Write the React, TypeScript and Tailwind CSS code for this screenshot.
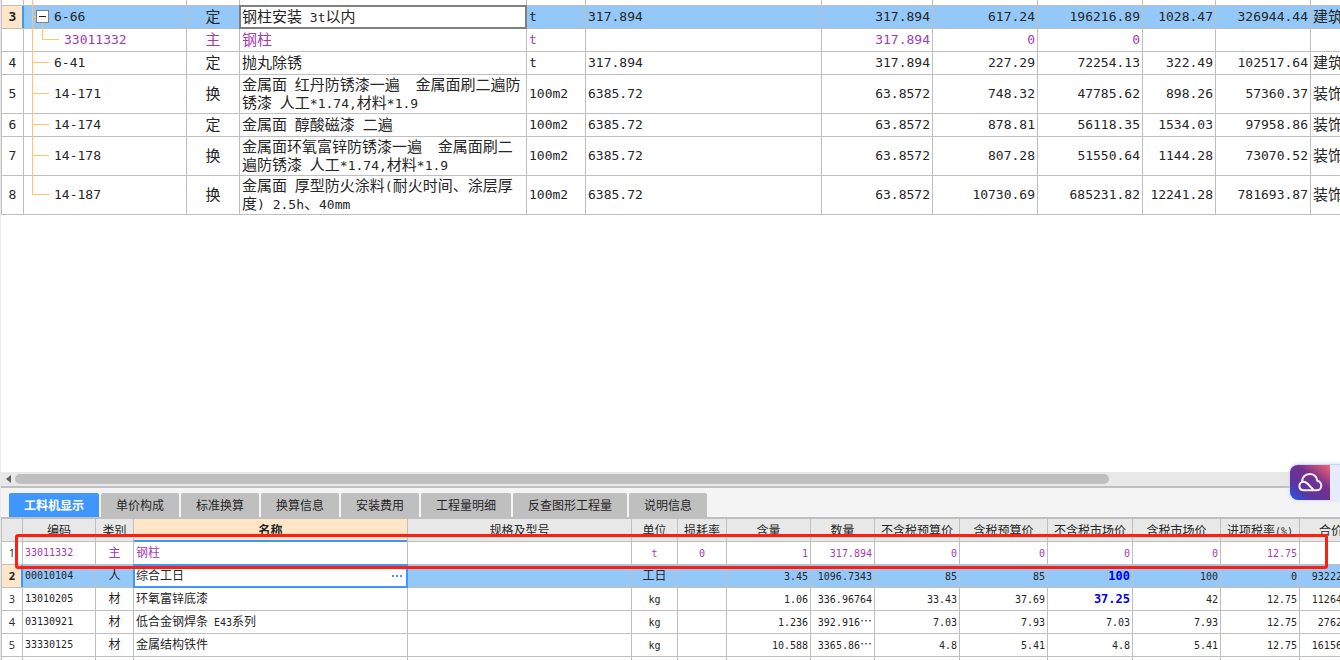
import { useState } from "react";
import clsx from "clsx";

const CJK = "font-['Noto_Sans_CJK_SC',sans-serif]";
const MONO = "font-['DejaVu_Sans_Mono','Noto_Sans_CJK_SC',monospace]";

type Quota = {
  no: string;
  code: string;
  kind: string;
  name: string;
  unit: string;
  expr: string;
  qty: string;
  price: string;
  total: string;
  fullPrice: string;
  fullTotal: string;
  major: string;
  node: "open" | "child" | "leaf" | "last";
};

const QUOTAS: Quota[] = [
  { no: "3", code: "6-66", kind: "定", name: "钢柱安装 3t以内", unit: "t", expr: "317.894", qty: "317.894", price: "617.24", total: "196216.89", fullPrice: "1028.47", fullTotal: "326944.44", major: "建筑", node: "open" },
  { no: "", code: "33011332", kind: "主", name: "钢柱", unit: "t", expr: "", qty: "317.894", price: "0", total: "0", fullPrice: "", fullTotal: "", major: "", node: "child" },
  { no: "4", code: "6-41", kind: "定", name: "抛丸除锈", unit: "t", expr: "317.894", qty: "317.894", price: "227.29", total: "72254.13", fullPrice: "322.49", fullTotal: "102517.64", major: "建筑", node: "leaf" },
  { no: "5", code: "14-171", kind: "换", name: "金属面 红丹防锈漆一遍  金属面刷二遍防\n锈漆 人工*1.74,材料*1.9", unit: "100m2", expr: "6385.72", qty: "63.8572", price: "748.32", total: "47785.62", fullPrice: "898.26", fullTotal: "57360.37", major: "装饰", node: "leaf" },
  { no: "6", code: "14-174", kind: "定", name: "金属面 醇酸磁漆 二遍", unit: "100m2", expr: "6385.72", qty: "63.8572", price: "878.81", total: "56118.35", fullPrice: "1534.03", fullTotal: "97958.86", major: "装饰", node: "leaf" },
  { no: "7", code: "14-178", kind: "换", name: "金属面环氧富锌防锈漆一遍  金属面刷二\n遍防锈漆 人工*1.74,材料*1.9", unit: "100m2", expr: "6385.72", qty: "63.8572", price: "807.28", total: "51550.64", fullPrice: "1144.28", fullTotal: "73070.52", major: "装饰", node: "leaf" },
  { no: "8", code: "14-187", kind: "换", name: "金属面 厚型防火涂料(耐火时间、涂层厚\n度) 2.5h、40mm", unit: "100m2", expr: "6385.72", qty: "63.8572", price: "10730.69", total: "685231.82", fullPrice: "12241.28", fullTotal: "781693.87", major: "装饰", node: "last" },
];

const TABS = [
  { label: "工料机显示", width: "w-[90px]" },
  { label: "单价构成", width: "w-[78px]" },
  { label: "标准换算", width: "w-[78px]" },
  { label: "换算信息", width: "w-[78px]" },
  { label: "安装费用", width: "w-[78px]" },
  { label: "工程量明细", width: "w-[90px]" },
  { label: "反查图形工程量", width: "w-[114px]" },
  { label: "说明信息", width: "w-[78px]" },
];

const RESOURCE_HEADS = ["编码", "类别", "名称", "规格及型号", "单位", "损耗率", "含量", "数量", "不含税预算价", "含税预算价", "不含税市场价", "含税市场价", "进项税率(%)", "合价"];

type Resource = {
  code: string;
  kind: string;
  name: string;
  unit: string;
  loss: string;
  // 含量, 数量, four prices, tax rate, amount
  values: string[];
  changed?: boolean;
};

const RESOURCES: Resource[] = [
  { code: "33011332", kind: "主", name: "钢柱", unit: "t", loss: "0", values: ["1", "317.894", "0", "0", "0", "0", "12.75", ""] },
  { code: "00010104", kind: "人", name: "综合工日", unit: "工日", loss: "", values: ["3.45", "1096.7343", "85", "85", "100", "100", "0", "93222.42"], changed: true },
  { code: "13010205", kind: "材", name: "环氧富锌底漆", unit: "kg", loss: "", values: ["1.06", "336.96764", "33.43", "37.69", "37.25", "42", "12.75", "11264.83"], changed: true },
  { code: "03130921", kind: "材", name: "低合金钢焊条 E43系列", unit: "kg", loss: "", values: ["1.236", "392.916…", "7.03", "7.93", "7.03", "7.93", "12.75", "2762.20"] },
  { code: "33330125", kind: "材", name: "金属结构铁件", unit: "kg", loss: "", values: ["10.588", "3365.86…", "4.8", "5.41", "4.8", "5.41", "12.75", "16156.14"] },
];

/* Latin runs are set a little smaller so two of them take one Chinese character */
function Mixed({ text, small }: { text: string; small?: boolean }) {
  return (
    <>
      {text.split(/([\x20-\x7e]+)/).map((part, i) =>
        i % 2 === 1 ? (
          <span key={i} className={clsx(MONO, "leading-none", small ? "text-[10px]" : "text-[13px]")}>
            {part}
          </span>
        ) : (
          part
        )
      )}
    </>
  );
}

function TreeLines({ node }: { node: Quota["node"] }) {
  return (
    <>
      <span
        className={clsx(
          "absolute left-[8px] w-px bg-[#ffc56e]",
          node === "last" ? "top-0 bottom-1/2" : "top-0 -bottom-px"
        )}
      />
      {node === "open" && (
        <>
          <span className="absolute left-[8px] top-[10px] h-px w-[4px] bg-[#ffc56e]" />
          <span className="absolute left-[18px] top-[17px] -bottom-px w-px bg-[#ffc56e]" />
          <button
            type="button"
            aria-label="收起"
            className="absolute left-[12px] top-[4px] flex size-[13px] items-center justify-center border border-[#808080] bg-white"
          >
            <span className="h-px w-[7px] bg-[#202020]" />
          </button>
        </>
      )}
      {node === "child" && (
        <span className="absolute left-[18px] top-0 h-[11px] w-[17px] border-b border-l border-[#ffc56e]" />
      )}
      {(node === "leaf" || node === "last") && (
        <span className="absolute left-[8px] top-[calc(50%-1px)] h-px w-[17px] bg-[#ffc56e]" />
      )}
    </>
  );
}

const CELL = "relative border-r border-b border-[#bfbfbf] p-0 whitespace-pre";

function QuotaRow({ row }: { row: Quota }) {
  const selected = row.node === "open";
  const cell = clsx(CELL, "px-[2px]");
  const num = clsx(cell, MONO, "text-right text-[13px]");

  return (
    <tr
      className={clsx(
        row.name.includes("\n") ? "h-[39px]" : "h-[23px]",
        selected && "bg-[#93c8f8]",
        row.node === "child" ? "text-[#a33bb2]" : "text-[#262626]"
      )}
    >
      <td className={clsx(CELL, MONO, "text-center text-[13px]", selected && "bg-[#ffe6c8] font-bold")}>
        {row.no}
        {selected && <span className="absolute inset-y-0 -right-px w-[2px] bg-[#3f97fd]" />}
      </td>
      <td className={clsx(CELL, MONO, "text-[13px]", row.node === "child" ? "pl-[40px]" : "pl-[30px]")}>
        <TreeLines node={row.node} />
        {row.code}
      </td>
      <td className={clsx(cell, "pb-[2px] text-center")}>{row.kind}</td>
      <td className={clsx(cell, "pb-[2px]", selected && "bg-white")}>
        {selected && <span className="absolute -inset-px border-2 border-[#808080]" />}
        {row.name.split("\n").map((line) => (
          <div key={line} className="h-[18px]">
            <Mixed text={line} />
          </div>
        ))}
      </td>
      <td className={clsx(cell, MONO, "text-[13px]")}>{row.unit}</td>
      <td className={clsx(cell, MONO, "text-[13px]")}>{row.expr}</td>
      <td className={num}>{row.qty}</td>
      <td className={num}>{row.price}</td>
      <td className={num}>{row.total}</td>
      <td className={num}>{row.fullPrice}</td>
      <td className={num}>{row.fullTotal}</td>
      <td className={clsx(cell, "overflow-hidden pb-[2px]")}>{row.major}</td>
    </tr>
  );
}

function QuotaTable() {
  return (
    <table className="w-full min-w-[1362px] table-fixed border-separate border-spacing-0 border-l border-[#bfbfbf] text-[15px] leading-[18px]">
      <colgroup>
        <col className="w-[22px]" />
        <col className="w-[163px]" />
        <col className="w-[53px]" />
        <col className="w-[287px]" />
        <col className="w-[59px]" />
        <col className="w-[236px]" />
        <col className="w-[111px]" />
        <col className="w-[105px]" />
        <col className="w-[105px]" />
        <col className="w-[73px]" />
        <col className="w-[95px]" />
        <col />
      </colgroup>
      <tbody>
        {/* tail of the row that is scrolled off */}
        <tr className="h-[6px]">
          {Array.from({ length: 12 }).map((_, i) => (
            <td key={i} className={CELL}>
              {i === 1 && <span className="absolute left-[8px] top-0 -bottom-px w-px bg-[#ffc56e]" />}
            </td>
          ))}
        </tr>
        {QUOTAS.map((row) => (
          <QuotaRow key={row.code} row={row} />
        ))}
      </tbody>
    </table>
  );
}

function ResourceRow({ row, index }: { row: Resource; index: number }) {
  const [name, setName] = useState(row.name);
  const selected = index === 1;
  const cell = clsx(CELL, "px-[2px] pb-[2px]");

  return (
    <tr
      className={clsx(
        "h-[23px]",
        selected && "bg-[#93c8f8]",
        index === 0 ? "text-[#a33bb2]" : "text-[#262626]"
      )}
    >
      <td className={clsx(CELL, "text-center font-['Open_Sans',sans-serif] text-[11px] text-[#262626]", selected && "bg-[#ffe6c8] font-bold")}>
        {index + 1}
        {selected && <span className="absolute inset-y-0 -right-px w-[2px] bg-[#3f97fd]" />}
      </td>
      <td className={clsx(CELL, MONO, "px-[2px] text-[10px]")}>{row.code}</td>
      <td className={clsx(cell, "text-center")}>{row.kind}</td>
      <td className={cell}>
        {selected ? (
          <div className="absolute -inset-px flex items-center border-2 border-[#3f97fd] bg-white pl-px">
            <input
              aria-label="名称"
              value={name}
              onChange={(e) => setName(e.target.value)}
              className="min-w-0 flex-1 bg-transparent pb-[2px] outline-none"
            />
            <button type="button" aria-label="选择" className="flex gap-[2px] px-1">
              <span className="size-[2px] bg-[#4f93c8]" />
              <span className="size-[2px] bg-[#4f93c8]" />
              <span className="size-[2px] bg-[#4f93c8]" />
            </button>
          </div>
        ) : (
          <Mixed text={row.name} small />
        )}
      </td>
      <td className={cell} />
      <td className={clsx(cell, "text-center")}>
        <Mixed text={row.unit} small />
      </td>
      <td className={clsx(cell, "text-center")}>
        <Mixed text={row.loss} small />
      </td>
      {row.values.map((value, i) => (
        <td key={i} className={clsx(CELL, "pr-[2px] pb-[2px] text-right")}>
          {row.changed && i === 4 ? (
            <span className={clsx(MONO, "text-[12px] leading-none font-bold text-[#0000f0]")}>{value}</span>
          ) : (
            <Mixed text={value} small />
          )}
        </td>
      ))}
    </tr>
  );
}

function ResourceTable() {
  return (
    <table className="w-full min-w-[1362px] table-fixed border-separate border-spacing-0 border-l border-[#bfbfbf] bg-white text-[12px] leading-[16px]">
      <colgroup>
        <col className="w-[21px]" />
        <col className="w-[73px]" />
        <col className="w-[38px]" />
        <col className="w-[274px]" />
        <col className="w-[224px]" />
        <col className="w-[46px]" />
        <col className="w-[49px]" />
        <col className="w-[84px]" />
        <col className="w-[64px]" />
        <col className="w-[85px]" />
        <col className="w-[88px]" />
        <col className="w-[85px]" />
        <col className="w-[88px]" />
        <col className="w-[79px]" />
        <col />
      </colgroup>
      <thead>
        <tr className="h-[23px] bg-[#e8e8e8] text-[#262626]">
          <th className={CELL} />
          {RESOURCE_HEADS.map((head) => (
            <th
              key={head}
              className={clsx(CELL, "text-center", head === "名称" ? "bg-[#ffe6c8] font-bold" : "font-normal")}
            >
              <Mixed text={head} small />
              {head === "名称" && <span className="absolute inset-x-0 -bottom-px h-[2px] bg-[#3f97fd]" />}
            </th>
          ))}
        </tr>
      </thead>
      <tbody>
        {RESOURCES.map((row, i) => (
          <ResourceRow key={row.code} row={row} index={i} />
        ))}
        <tr className="h-[23px]">
          {Array.from({ length: 15 }).map((_, i) => (
            <td key={i} className={CELL} />
          ))}
        </tr>
      </tbody>
    </table>
  );
}

function CloudButton() {
  return (
    <button
      type="button"
      aria-label="云助手"
      className="absolute right-0 -top-[8px] z-20 flex h-[36px] w-[50px] overflow-hidden rounded-l-[8px] border-t border-[#c5d7fd] bg-[#e6ecfe] shadow-[0_0_4px_#c9d6fb]"
    >
      <span className="flex h-full w-[40px] items-center justify-center bg-[linear-gradient(38deg,#2257ea_3%,#5b359f_28%,#74308f_62%,#f0646c_98%)]">
        <svg width="26" height="22" viewBox="0 0 26 22" fill="none" stroke="#f6eef8" strokeWidth="2.1" strokeLinecap="round" strokeLinejoin="round">
          <path d="M5 10C4.8 5.4 8.2 2 12.6 2c4 0 7 2.6 7.8 6.8 2.4.8 3.9 2.6 3.9 4.9 0 2.7-2 4.6-4.7 4.6H6.8c-2.6 0-4.4-1.8-4.4-4.3s1.8-4.3 4.2-4.3c1.6 0 2.7.8 3.8 1.9l6.2 6.4" />
        </svg>
      </span>
    </button>
  );
}

export default function App() {
  const [tab, setTab] = useState(0);

  return (
    <main className={clsx(CJK, "flex h-screen flex-col overflow-hidden border-l border-[#e8e8e8] bg-white")}>
      <section className="min-h-0 flex-1 overflow-hidden">
        <QuotaTable />
      </section>

      <section className="relative h-[188px] shrink-0">
        <CloudButton />

        {/* horizontal scrollbar */}
        <div className="flex h-[14px] items-center bg-[#e8e8e8] pl-[5px]">
          <svg width="5" height="8" viewBox="0 0 5 8" className="mr-[4px] fill-[#606060]">
            <path d="M5 0v8L0 4z" />
          </svg>
          <div className="h-[10px] w-[82%] rounded-full bg-[#bfbfbf]" />
        </div>

        <div className="border-t-2 border-[#bfbfbf] bg-[#f4f4f4]">
          <div role="tablist" className="flex gap-[2px] pt-[5px] pl-2">
            {TABS.map(({ label, width }, i) => (
              <button
                key={label}
                type="button"
                role="tab"
                aria-selected={i === tab}
                onClick={() => setTab(i)}
                className={clsx(
                  "h-6 rounded-t-[2px] text-[12px] leading-[24px] whitespace-nowrap",
                  width,
                  i === tab ? "bg-[#3f97fd] font-bold text-white" : "bg-[#bfbfbf] text-[#262626]"
                )}
              >
                {label}
              </button>
            ))}
          </div>
        </div>

        <div className="relative overflow-hidden border-t-2 border-[#bfbfbf]">
          <ResourceTable />
          {/* callout round the first resource */}
          <div className="pointer-events-none absolute top-[15px] right-[12px] left-[14px] h-[35px] rounded-[3px] border-[3px] border-[#ff1f10]" />
        </div>
      </section>
    </main>
  );
}
